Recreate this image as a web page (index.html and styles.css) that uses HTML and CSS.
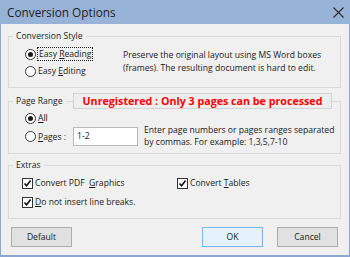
FILE: index.html
```html
<!DOCTYPE html>
<html>
<head>
<meta charset="utf-8">
<link rel="stylesheet" href="styles.css">
</head>
<body>
<div class="window">
  <div class="titlebar">
    <span class="title">Conversion Options</span>
    <svg class="close" width="11" height="11" viewBox="0 0 11 11"><path d="M0.5 0.5 L10.5 10.5 M10.5 0.5 L0.5 10.5" stroke="#2a2a2a" stroke-width="1.1" fill="none"/></svg>
  </div>
  <div class="client">
    <fieldset class="group g-style">
      <legend>Conversion Style</legend>
      <div class="style-body">
        <div class="options">
          <div class="opt"><span class="radio checked"></span><span class="focus">Easy <u>R</u>eading</span></div>
          <div class="opt"><span class="radio"></span><span>Easy <u>E</u>diting</span></div>
        </div>
        <p class="desc desc-style">Preserve the original layout using MS Word boxes<br>(frames). The resulting document is hard to edit.</p>
      </div>
    </fieldset>

    <div class="range-wrap">
      <fieldset class="group g-range">
        <legend>Page Range</legend>
        <div class="range-body">
          <div class="opt"><span class="radio checked"></span><span><u>A</u>ll</span></div>
          <div class="pages-row">
            <div class="opt pages-opt"><span class="radio"></span><span><u>P</u>ages :</span></div>
            <div class="input">1-2</div>
            <p class="desc desc-range">Enter page numbers or pages ranges separated<br>by commas. For example: 1,3,5,7-10</p>
          </div>
        </div>
      </fieldset>
      <div class="banner">Unregistered : Only 3 pages can be processed</div>
    </div>

    <fieldset class="group g-extras">
      <legend>Extras</legend>
      <div class="extras-body">
        <div class="opt"><span class="check"><svg width="9" height="9" viewBox="0 0 9 9"><path d="M1.5 4.5 L3.6 6.8 L7.6 1.6" stroke="#111" stroke-width="1.6" fill="none"/></svg></span><span>Convert PDF&nbsp; <u>G</u>raphics</span></div>
        <div class="opt"><span class="check"><svg width="9" height="9" viewBox="0 0 9 9"><path d="M1.5 4.5 L3.6 6.8 L7.6 1.6" stroke="#111" stroke-width="1.6" fill="none"/></svg></span><span>Convert <u>T</u>ables</span></div>
        <div class="opt full"><span class="check"><svg width="9" height="9" viewBox="0 0 9 9"><path d="M1.5 4.5 L3.6 6.8 L7.6 1.6" stroke="#111" stroke-width="1.6" fill="none"/></svg></span><span><u>D</u>o not insert line breaks.</span></div>
      </div>
    </fieldset>

    <div class="buttons">
      <div class="btn">Default</div>
      <div class="spacer"></div>
      <div class="btn btn-ok">OK</div>
      <div class="btn">Cancel</div>
    </div>
  </div>
</div>
</body>
</html>
```
FILE: styles.css
```css
* { box-sizing: border-box; }

body {
  margin: 0;
  background: #f0f0f0;
  font-family: "Open Sans", "Noto Sans", sans-serif;
  font-size: 8.6px;
  color: #1a1a1a;
}

.window {
  width: 350px;
  height: 257px;
  background: #f0f0f0;
  border: 1px solid #8ba7cf;
  border-top: 0;
  border-bottom-width: 2px;
  display: flex;
  flex-direction: column;
}

.titlebar {
  height: 24px;
  margin: 0 -1px;
  background: #98b3d8;
  display: flex;
  align-items: center;
  justify-content: space-between;
  padding: 0 6px 0 7px;
  flex: none;
}

.title {
  font-size: 11.8px;
  color: #1e1e1e;
  line-height: 14px;
}

.close { display: block; margin-top: 1px; }

.client {
  padding: 6px 8px 0 7px;
  display: flex;
  flex-direction: column;
}

.group {
  margin: 0;
  padding: 0;
  border: 1px solid #d9d9d9;
  min-width: 0;
}

.group legend {
  margin-left: 4px;
  padding: 0 3px;
  line-height: 12px;
  height: 12px;
  color: #222;
}

u { text-decoration: underline; text-underline-offset: 1px; }

.opt {
  display: flex;
  align-items: center;
  height: 16px;
  white-space: nowrap;
}

.radio {
  width: 11px;
  height: 11px;
  border-radius: 50%;
  border: 1px solid #333;
  background: #fff;
  margin-right: 2px;
  flex: none;
  display: flex;
  align-items: center;
  justify-content: center;
}

.radio.checked::after {
  content: "";
  width: 5px;
  height: 5px;
  border-radius: 50%;
  background: #1a1a1a;
}

.check {
  width: 11px;
  height: 11px;
  border: 1px solid #333;
  background: #fff;
  margin-right: 2px;
  flex: none;
  display: flex;
  align-items: center;
  justify-content: center;
}
.check svg { display: block; }

.focus {
  outline: 1px dotted #222;
  outline-offset: 0;
  padding: 0 1px;
  line-height: 12px;
}

.desc { margin: 0; white-space: nowrap; }

/* Conversion style */
.style-body {
  display: grid;
  grid-template-columns: 98px 1fr;
  padding: 4px 0 8px 16px;
}
.options { display: flex; flex-direction: column; gap: 1px; }
.desc-style { line-height: 13px; margin-top: 3px; }

/* Page range */
.range-wrap { position: relative; margin-top: 7px; }
.range-body { padding: 3px 0 7px 16px; display: flex; flex-direction: column; gap: 1px; }
.pages-row { display: flex; align-items: flex-start; height: 19px; }
.pages-opt { height: 19px; width: 48px; }
.input {
  width: 65px;
  height: 19px;
  background: #fff;
  border: 1px solid #b9b9b9;
  padding-left: 3px;
  line-height: 17px;
}
.desc-range { line-height: 12px; margin: -3px 0 0 6px; }

.banner {
  position: absolute;
  top: -2px;
  left: 65px;
  width: 259px;
  height: 16px;
  background: #eeeeee;
  border: 1px solid #d3d3d3;
  color: #ff0000;
  font-weight: 700;
  font-size: 10.7px;
  line-height: 14px;
  text-align: center;
  white-space: nowrap;
}

/* Extras */
.g-extras { margin-top: 5px; }
.extras-body {
  display: grid;
  grid-template-columns: 155px 1fr;
  row-gap: 3px;
  padding: 4px 0 8px 13px;
}
.full { grid-column: 1 / -1; }

/* Buttons */
.buttons {
  display: flex;
  margin: 8px 3px 0 3px;
  gap: 14px;
}
.spacer { flex: 1; }
.btn {
  width: 61px;
  height: 20px;
  background: #e1e1e1;
  border: 1px solid #adadad;
  text-align: center;
  line-height: 18px;
}
.btn-ok {
  background: #e5f1fb;
  border-color: #7eb4ea;
}
```
